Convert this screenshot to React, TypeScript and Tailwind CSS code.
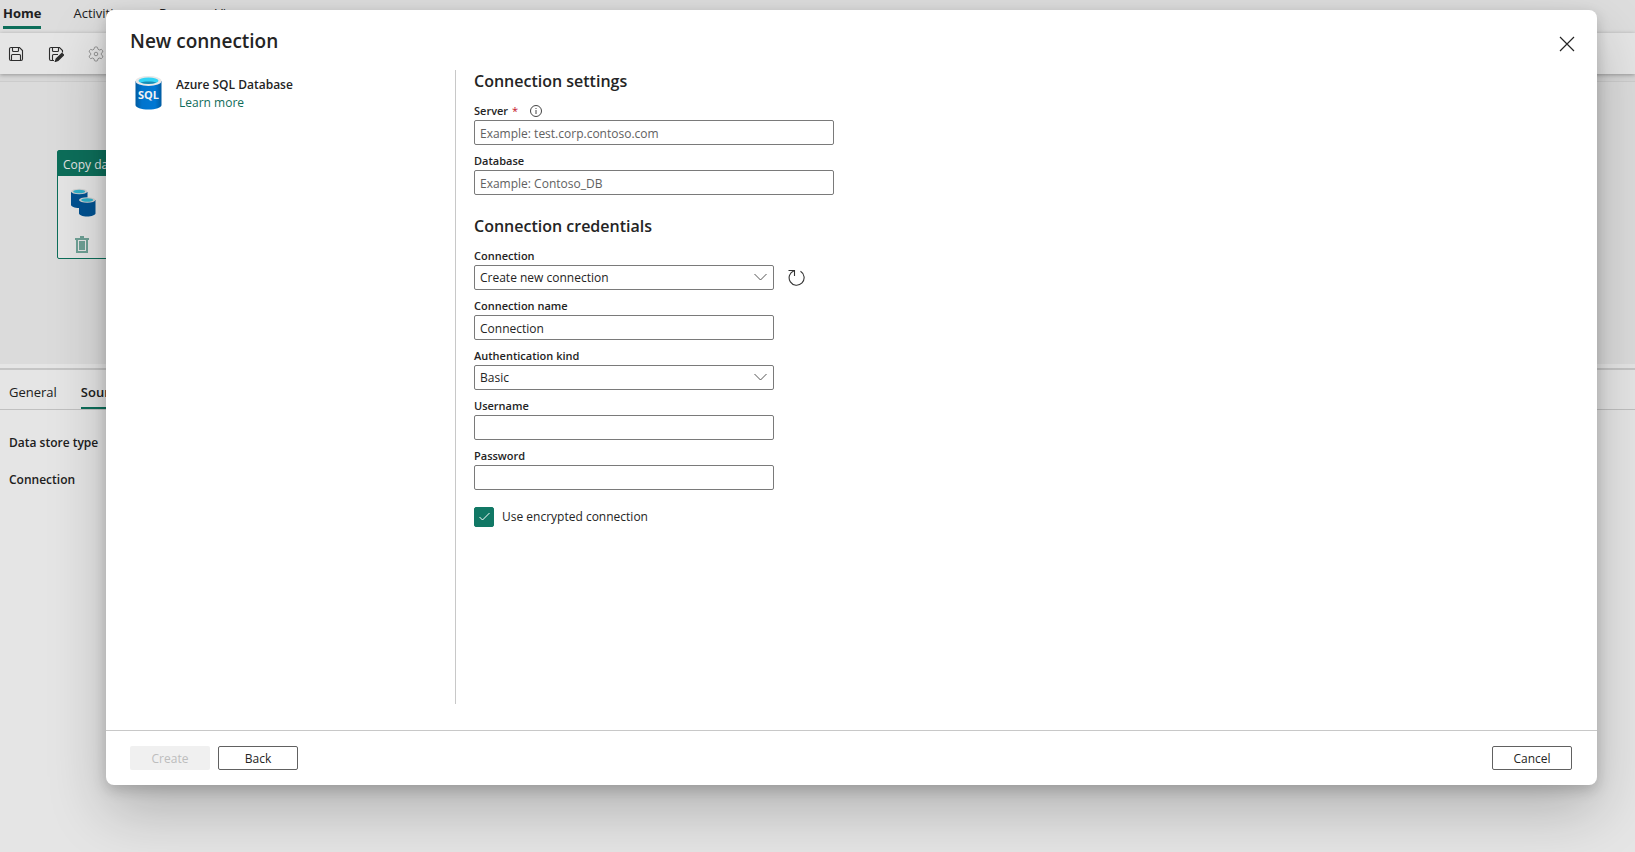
import { ReactNode, useState } from "react";

const tabs = ["Activities", "Run", "View"];

function SaveIcon({ edit }: { edit?: boolean }) {
  return (
    <svg width="16" height="16" viewBox="0 0 16 16" fill="none" stroke="#333" strokeWidth="1.1">
      <path
        d={
          edit
            ? "M6 14.500H3A1.500 1.500 0 0 1 1.500 13V3A1.500 1.500 0 0 1 3 1.500H11.500L14.500 4.500V6.500"
            : "M3 1.500H11.500L14.500 4.500V13A1.500 1.500 0 0 1 13 14.500H3A1.500 1.500 0 0 1 1.500 13V3A1.500 1.500 0 0 1 3 1.500Z"
        }
      />
      <path d="M4.500 1.500V4.500A1 1 0 0 0 5.500 5.500H9.500A1 1 0 0 0 10.500 4.500V1.500" />
      <path
        d={
          edit
            ? "M4.500 14.500V9.500A1 1 0 0 1 5.500 8.500H10"
            : "M3.500 14.500V9.500A1 1 0 0 1 4.500 8.500H11.500A1 1 0 0 1 12.500 9.500V14.500"
        }
      />
      {edit && <path d="M14 7.500L15.500 9L10 14.500L7.500 15.300L8.300 13Z" fill="#333" strokeWidth="1.400" />}
    </svg>
  );
}

function GearIcon() {
  return (
    <svg width="16" height="18" viewBox="0 0 18 18" fill="none" stroke="#a3a3a3" strokeWidth="1.1">
      <path
        d="M7.300 1.500Q9 0.400 10.700 1.500L11.200 3.600L12.700 4.500L15 3.800Q16.800 4.800 16.700 6.700L15 8V10L16.700 11.300Q16.800 13.200 15 14.200L12.700 13.500L11.200 14.400L10.700 16.500Q9 17.600 7.300 16.500L6.800 14.400L5.300 13.500L3 14.200Q1.200 13.200 1.300 11.300L3 10V8L1.300 6.700Q1.200 4.800 3 3.800L5.300 4.500L6.800 3.600Z"
        strokeLinejoin="round"
      />
      <circle cx="9" cy="9" r="2" />
    </svg>
  );
}

function SqlIcon() {
  return (
    <svg width="28" height="36" viewBox="0 0 28 36">
      <defs>
        <linearGradient id="sql">
          <stop offset="0" stopColor="#005ba1" />
          <stop offset="0.25" stopColor="#0074cd" />
          <stop offset="0.75" stopColor="#0078d4" />
          <stop offset="1" stopColor="#005ba1" />
        </linearGradient>
      </defs>
      <path d="M1.500 6V30C1.500 32.500 7.200 34.500 14.500 34.500S27.500 32.500 27.500 30V6Z" fill="url(#sql)" />
      <ellipse cx="14.500" cy="6" rx="13" ry="5" fill="#e8e8e8" />
      <ellipse cx="14.500" cy="5.700" rx="10" ry="3.200" fill="#32d4f5" />
      <path d="M6.500 7.600C9.500 6 19.500 6 22.500 7.600C19.500 9.300 9.500 9.300 6.500 7.600Z" fill="#198ab3" />
      <text
        x="14.500"
        y="24"
        textAnchor="middle"
        fontSize="11"
        fontWeight="700"
        fill="#f2f2f2"
        fontFamily="Open Sans, sans-serif"
      >
        SQL
      </text>
    </svg>
  );
}

function CopyDataIcon() {
  return (
    <svg width="26" height="30" viewBox="0 0 26 30">
      <path d="M1 4V17C1 18.500 4.500 20 9 20S17.500 18.500 17.500 17V4Z" fill="#005ba1" />
      <ellipse cx="9.200" cy="3.500" rx="8.200" ry="2.800" fill="#e8e8e8" />
      <ellipse cx="9.200" cy="3.500" rx="6" ry="1.700" fill="#35c5e0" />
      <path d="M9 12V25.500C9 27 12.500 28.500 17 28.500S25.500 27 25.500 25.500V12Z" fill="#005ba1" />
      <ellipse cx="17.200" cy="12" rx="8.200" ry="2.800" fill="#e8e8e8" />
      <ellipse cx="17.200" cy="12" rx="6" ry="1.700" fill="#35c5e0" />
    </svg>
  );
}

function TrashIcon() {
  return (
    <svg width="14" height="17" viewBox="0 0 14 17" fill="#7bb3a6">
      <path d="M0 2H5V0H9V2H14V4H13V17H1V4H0ZM3 4V15H11V4Z" fillRule="evenodd" />
      <path d="M4 5H10V14H4Z" />
    </svg>
  );
}

function Field({ id, label, children }: { id: string; label: ReactNode; children: ReactNode }) {
  return (
    <div className="flex flex-col pb-[3px]">
      <label htmlFor={id} className="flex h-[22px] items-center pt-1 text-[11px] font-semibold">
        {label}
      </label>
      {children}
    </div>
  );
}

const inputClass =
  "h-[25px] w-full rounded-xs border border-[#7a7a7a] bg-white px-[5px] pt-px text-xs text-[#242424] outline-none placeholder:text-[#616161]";

function Select({ id, value }: { id: string; value: string }) {
  return (
    <div className="relative">
      <select id={id} className={`${inputClass} block appearance-none`}>
        <option>{value}</option>
      </select>
      <svg
        className="pointer-events-none absolute top-2 right-[7px]"
        width="13"
        height="8"
        viewBox="0 0 13 8"
        fill="none"
        stroke="#555"
      >
        <path d="M0.500 1L6.500 7L12.500 1" />
      </svg>
    </div>
  );
}

function Background() {
  return (
    <div className="flex min-h-screen flex-col bg-white">
      <div className="flex h-[33px] gap-8 bg-[#f6f6f6] px-[3px] pt-1 text-[13px] leading-[18px]">
        <a href="#" className="h-[25px] border-b-3 border-[#0f7b65] font-bold">
          Home
        </a>
        {tabs.map((tab) => (
          <a href="#" key={tab}>
            {tab}
          </a>
        ))}
      </div>
      <div className="z-10 flex h-[41px] items-center gap-6 bg-white px-2 shadow-[0_1px_4px_rgba(0,0,0,0.3)]">
        <button aria-label="Save">
          <SaveIcon />
        </button>
        <button aria-label="Save as">
          <SaveIcon edit />
        </button>
        <button aria-label="Settings">
          <GearIcon />
        </button>
      </div>
      <div className="h-[7px] bg-[#f0f0f0]" />
      <div className="h-[283px] border-t border-[#e4e4e4] bg-[#f4f4f4] pt-[68px] pl-[57px]">
        <div className="h-[109px] w-56 rounded-xs border border-[#0f7b65] bg-white">
          <div className="flex h-[25px] items-center bg-[#0f7b65] px-[5px] pt-[3px] text-xs text-white">Copy data</div>
          <div className="flex flex-col items-start gap-[18px] px-3 pt-3">
            <CopyDataIcon />
            <button aria-label="Delete" className="ml-[5px]">
              <TrashIcon />
            </button>
          </div>
        </div>
      </div>
      <div className="h-1" />
      <div className="flex h-[42px] gap-6 border-t-2 border-b border-t-[#dcdcdc] border-b-[#d6d6d6] px-[9px] text-[13px]">
        <a href="#" className="flex items-center pt-[6px]">
          General
        </a>
        <a href="#" className="flex items-center border-b-2 border-[#0f7b65] pt-2 font-semibold">
          Source
        </a>
      </div>
      <div className="flex flex-col gap-[17px] px-[9px] pt-[23px] text-xs leading-5 font-semibold">
        <div>Data store type</div>
        <div>Connection</div>
      </div>
    </div>
  );
}

export default function App() {
  const [name, setName] = useState("Connection");
  const [encrypted, setEncrypted] = useState(true);

  return (
    <div className="relative h-screen overflow-hidden font-['Open_Sans','Segoe_UI',sans-serif] text-[#242424]">
      <Background />
      <div className="absolute inset-0 z-20 flex bg-black/10 pt-[10px] pr-[38px] pb-[67px] pl-[106px]">
        <div
          role="dialog"
          aria-labelledby="title"
          className="flex flex-1 flex-col rounded-lg bg-white shadow-[0_26px_58px_rgba(0,0,0,0.22),0_5px_14px_rgba(0,0,0,0.18)]"
        >
          <div className="flex h-[60px] items-start justify-between pr-[22px] pl-6">
            <h1 id="title" className="pt-[17px] text-[19px] leading-7 font-semibold">
              New connection
            </h1>
            <button aria-label="Close" className="mt-[26px]">
              <svg width="16" height="16" viewBox="0 0 16 16" stroke="#242424" strokeWidth="1.2">
                <path d="M1 1L15 15M15 1L1 15" />
              </svg>
            </button>
          </div>
          <div className="flex flex-1 pb-[26px] pl-6">
            <div className="flex w-[325px] gap-[14px] pt-[5px] pl-1">
              <SqlIcon />
              <div className="pt-[1px] text-xs leading-[18px]">
                <p className="font-semibold">Azure SQL Database</p>
                <a href="#" className="ml-[3px] text-[#0f6c5a]">
                  Learn more
                </a>
              </div>
            </div>
            <div className="flex-1 border-l border-[#c8c8c8] pl-[18px]">
              <h2 className="h-7 text-base leading-[22px] font-semibold">Connection settings</h2>
              <div className="w-[360px]">
                <Field
                  id="server"
                  label={
                    <>
                      Server<span className="ml-1 font-normal text-[#c50f1f]">*</span>
                      <svg className="ml-3" width="12" height="12" viewBox="0 0 12 12" fill="none" stroke="#444">
                        <circle cx="6" cy="6" r="5.500" />
                        <path d="M6 5V9M6 3V4" />
                      </svg>
                    </>
                  }
                >
                  <input id="server" className={inputClass} placeholder="Example: test.corp.contoso.com" />
                </Field>
                <Field id="database" label="Database">
                  <input id="database" className={inputClass} placeholder="Example: Contoso_DB" />
                </Field>
              </div>
              <h2 className="mt-[17px] h-7 text-base leading-[22px] font-semibold">Connection credentials</h2>
              <div className="flex items-end gap-[14px]">
                <div className="w-[300px]">
                  <Field id="connection" label="Connection">
                    <Select id="connection" value="Create new connection" />
                  </Field>
                </div>
                <button aria-label="Refresh" className="mb-[7px]">
                  <svg width="17" height="17" viewBox="0 0 17 17" fill="none" stroke="#333" strokeWidth="1.1">
                    <path d="M0.500 1.500H6.500V7" />
                    <path d="M6 1.700A7.500 7.500 0 1 0 12.500 2.300" />
                  </svg>
                </button>
              </div>
              <div className="w-[300px]">
                <Field id="name" label="Connection name">
                  <input id="name" className={inputClass} value={name} onChange={(e) => setName(e.target.value)} />
                </Field>
                <Field id="auth" label="Authentication kind">
                  <Select id="auth" value="Basic" />
                </Field>
                <Field id="username" label="Username">
                  <input id="username" className={inputClass} />
                </Field>
                <Field id="password" label="Password">
                  <input id="password" type="password" className={inputClass} />
                </Field>
              </div>
              <label className="mt-[14px] flex items-center gap-2 text-xs leading-5">
                <span className="relative flex">
                  <input
                    type="checkbox"
                    checked={encrypted}
                    onChange={(e) => setEncrypted(e.target.checked)}
                    className="h-5 w-5 appearance-none rounded-xs border border-[#117865] checked:bg-[#117865]"
                  />
                  <svg
                    className="pointer-events-none absolute top-[5px] left-[5px]"
                    width="11"
                    height="9"
                    viewBox="0 0 11 9"
                    fill="none"
                    stroke="white"
                  >
                    <path d="M0.500 5L3.500 8L10.500 1" />
                  </svg>
                </span>
                Use encrypted connection
              </label>
            </div>
          </div>
          <div className="flex h-[55px] items-start gap-2 border-t border-[#c8c8c8] pt-[15px] pr-[25px] pl-6 text-xs">
            <button disabled className="h-6 w-20 rounded-xs bg-[#f0f0f0] pt-px text-[#bdbdbd]">
              Create
            </button>
            <button className="h-6 w-20 rounded-xs border border-[#616161] pt-px">Back</button>
            <button className="ml-auto h-6 w-20 rounded-xs border border-[#616161] pt-px">Cancel</button>
          </div>
        </div>
      </div>
    </div>
  );
}
